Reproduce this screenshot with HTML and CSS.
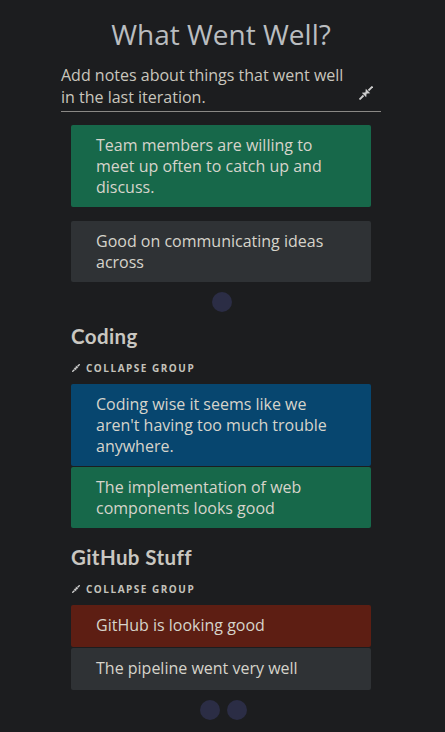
FILE: index.html
```html
<!DOCTYPE html>
<html lang="en">
<head>
<meta charset="utf-8">
<title>What Went Well?</title>
<link rel="stylesheet" href="styles.css">
</head>
<body>
<main class="board">
  <h1 class="title">What Went Well?</h1>
  <div class="prompt">
    <p class="prompt-text">Add notes about things that went well in the last iteration.</p>
    <button class="icon-btn" aria-label="Collapse all">
      <svg width="14" height="14" viewBox="0 0 14 14"><path d="M13.5 0.5 L9.5 4.5" stroke="#cfcfcf" stroke-width="1.8"/><path d="M6.3 7.7 L6.8 2.8 L11.2 7.2 Z" fill="#cfcfcf"/><path d="M0.5 13.5 L4.5 9.5" stroke="#cfcfcf" stroke-width="1.8"/><path d="M7.7 6.3 L2.8 6.8 L7.2 11.2 Z" fill="#cfcfcf"/></svg>
    </button>
  </div>

  <section class="ungrouped">
    <div class="card green">Team members are willing to meet up often to catch up and discuss.</div>
    <div class="card gray">Good on communicating ideas across</div>
  </section>
  <div class="dots"><span class="dot"></span></div>

  <section class="group first">
    <h2 class="group-title">Coding</h2>
    <button class="collapse">
      <svg width="8" height="8" viewBox="0 0 14 14"><path d="M13.5 0.5 L9.5 4.5" stroke="#cfcfcf" stroke-width="2.4"/><path d="M6.3 7.7 L6.8 2.8 L11.2 7.2 Z" fill="#cfcfcf"/><path d="M0.5 13.5 L4.5 9.5" stroke="#cfcfcf" stroke-width="2.4"/><path d="M7.7 6.3 L2.8 6.8 L7.2 11.2 Z" fill="#cfcfcf"/></svg>
      <span>COLLAPSE GROUP</span>
    </button>
    <div class="stack">
      <div class="card blue">Coding wise it seems like we aren't having too much trouble anywhere.</div>
      <div class="card green">The implementation of web components looks good</div>
    </div>
  </section>

  <section class="group">
    <h2 class="group-title">GitHub Stuff</h2>
    <button class="collapse">
      <svg width="8" height="8" viewBox="0 0 14 14"><path d="M13.5 0.5 L9.5 4.5" stroke="#cfcfcf" stroke-width="2.4"/><path d="M6.3 7.7 L6.8 2.8 L11.2 7.2 Z" fill="#cfcfcf"/><path d="M0.5 13.5 L4.5 9.5" stroke="#cfcfcf" stroke-width="2.4"/><path d="M7.7 6.3 L2.8 6.8 L7.2 11.2 Z" fill="#cfcfcf"/></svg>
      <span>COLLAPSE GROUP</span>
    </button>
    <div class="stack">
      <div class="card red">GitHub is looking good</div>
      <div class="card gray">The pipeline went very well</div>
    </div>
  </section>
  <div class="dots last"><span class="dot"></span><span class="dot"></span></div>
</main>
</body>
</html>
```
FILE: styles.css
```css
html, body {
  margin: 0;
  padding: 0;
  background: #1c1d1f;
}
body {
  font-family: "Open Sans", "Noto Sans", sans-serif;
  color: #d4d2ca;
  height: 732px;
  overflow: hidden;
}
.board {
  width: 320px;
  margin-left: 61px;
  padding-top: 15px;
}
.title {
  margin: 0;
  font-size: 28px;
  line-height: 38px;
  font-weight: 400;
  text-align: center;
  color: #babdc0;
}
.prompt {
  margin-top: 11px;
  display: flex;
  align-items: flex-end;
  gap: 10px;
  border-bottom: 1px solid #8a8885;
  padding-bottom: 3px;
}
.prompt-text {
  flex: 1;
  margin: 0;
  font-size: 16px;
  line-height: 22px;
  color: #c9c6bd;
}
.icon-btn {
  background: none;
  border: 0;
  padding: 0;
  margin: 0 8px 8px 0;
  width: 14px;
  height: 14px;
  display: flex;
}
.ungrouped {
  margin: 13px 10px 0;
  display: flex;
  flex-direction: column;
  gap: 14px;
}
.card {
  box-sizing: border-box;
  min-height: 42px;
  border-radius: 2px;
  padding: 10px 25px 9px;
  font-size: 16px;
  line-height: 21px;
  color: #d6d4cb;
}
.green { background: #17684a; }
.gray { background: #2f3235; }
.blue { background: #07466f; }
.red { background: #5d1e13; }
.dots {
  display: flex;
  justify-content: center;
  gap: 7px;
  margin-top: 10px;
  padding-left: 2px;
}
.dots.last { margin-top: 10px; padding-left: 4px; }
.dot {
  width: 20px;
  height: 20px;
  border-radius: 50%;
  background: #2b2d45;
}
.group {
  margin: 17px 10px 0;
}
.group.first { margin-top: 12px; }
.group-title {
  margin: 0;
  font-family: Lato, "Noto Sans", sans-serif;
  font-weight: 700;
  font-size: 20.5px;
  line-height: 24px;
  letter-spacing: 0.4px;
  color: #c9c7c1;
}
.collapse {
  margin-top: 13px;
  background: none;
  border: 0;
  padding: 0 0 0 1px;
  display: flex;
  align-items: center;
  gap: 6px;
  font-family: "Open Sans", sans-serif;
  font-weight: 700;
  font-size: 10px;
  line-height: 14px;
  letter-spacing: 1.5px;
  color: #c4c2bb;
}
.stack {
  margin-top: 9px;
  display: flex;
  flex-direction: column;
  gap: 1px;
}
```
